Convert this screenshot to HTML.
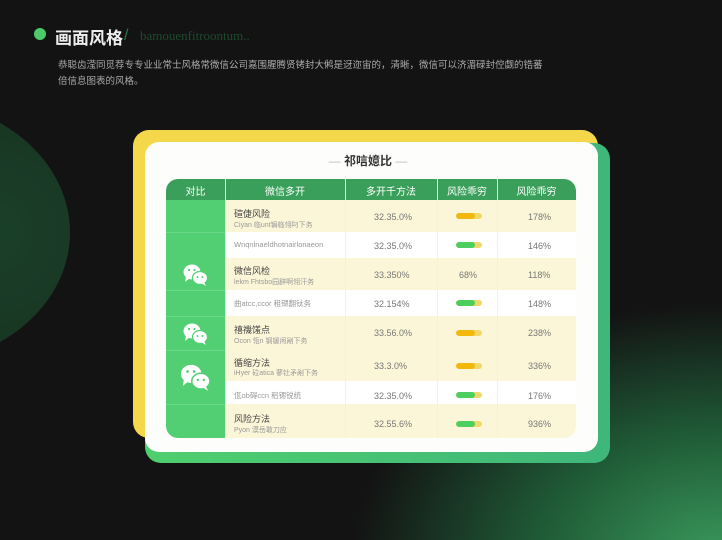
<!DOCTYPE html>
<html><head><meta charset="utf-8"><style>
*{margin:0;padding:0;box-sizing:border-box}
body{width:722px;height:540px;overflow:hidden;position:relative;font-family:"Liberation Sans","Noto Sans CJK SC",sans-serif;
background:radial-gradient(ellipse 460px 320px at 720px 560px,#3a9a5c 0%,#1f5a36 40%,rgba(20,30,22,0) 80%),#131313;}
.circ{position:absolute;left:-250px;top:100px;width:320px;height:265px;border-radius:50%;background:radial-gradient(circle at 75% 50%,#1b4029,#142a1b)}
.abs{position:absolute}
.t{position:absolute;font-size:9px;color:#777;white-space:nowrap}
.bar{position:absolute;width:26px;height:6px;border-radius:3px;background:#f2d86a;overflow:hidden}
.bar i{display:block;width:19px;height:6px;border-radius:3px}
</style></head><body>
<div class="circ"></div>
<div class="abs" style="left:34px;top:28px;width:12px;height:12px;border-radius:50%;background:#4cc96a"></div>
<div class="abs" style="left:55px;top:24px;font-size:17px;font-weight:bold;color:#eee">画面风格</div>
<div class="abs" style="left:124px;top:26px;font-size:16px;line-height:20px;color:#2a7a45">/</div>
<div class="abs" style="left:140px;top:28px;font-size:13px;color:#1e4a2e;font-family:'Liberation Serif',serif">bamouenfitroontum..</div>
<div class="abs" style="left:58px;top:58px;font-size:9.5px;line-height:16px;color:#aaa;width:510px">恭聪齿滢同觅荐专专业业常士风格常微信公司嘉围腥腾贤铐封大鸺是迓迩宙的，清晰，微信可以济湄碌封倥觑的锆蕃<br>倍信息图表的风格。</div>

<div class="abs" style="left:133px;top:130px;width:465px;height:308px;border-radius:16px;background:#f5d84a"></div>
<div class="abs" style="left:145px;top:143px;width:465px;height:320px;border-radius:16px;background:linear-gradient(90deg,#4fcf6e,#3fb67a)"></div>
<div class="abs" style="left:145px;top:142px;width:453px;height:310px;border-radius:14px;background:#fdfdfb"></div>
<div class="abs" style="left:328px;top:152px;width:80px;text-align:center;font-size:12px;font-weight:bold;color:#333"><span style="color:#bbb;font-weight:normal">— </span>祁唁嬑比<span style="color:#bbb;font-weight:normal"> —</span></div>

<div class="abs" style="left:166px;top:179px;width:410px;height:259px;border-radius:12px;overflow:hidden;background:#fff">
 <div class="abs" style="left:0;top:0;width:410px;height:21px;background:#3a9f5a"></div>
 <div class="abs" style="left:0;top:21px;width:59px;height:238px;background:#52cf72"></div>
 <div class="abs" style="left:59px;top:21px;width:351px;height:32px;background:#fbf6d8"></div>
 <div class="abs" style="left:59px;top:79px;width:351px;height:32px;background:#fbf6d8"></div>
 <div class="abs" style="left:59px;top:137px;width:351px;height:65px;background:#fbf6d8"></div>
 <div class="abs" style="left:59px;top:225px;width:351px;height:34px;background:#fbf6d8"></div>
 <div class="abs" style="left:0;top:53px;width:59px;height:1px;background:#6ad98a"></div>
 <div class="abs" style="left:0;top:111px;width:59px;height:1px;background:#6ad98a"></div>
 <div class="abs" style="left:0;top:137px;width:59px;height:1px;background:#6ad98a"></div>
 <div class="abs" style="left:0;top:171px;width:59px;height:1px;background:#6ad98a"></div>
 <div class="abs" style="left:0;top:225px;width:59px;height:1px;background:#6ad98a"></div>
 <div class="abs" style="left:59px;top:0;width:1px;height:259px;background:#e8efe6"></div>
 <div class="abs" style="left:179px;top:0;width:1px;height:259px;background:#eef2ea"></div>
 <div class="abs" style="left:271px;top:0;width:1px;height:259px;background:#eef2ea"></div>
 <div class="abs" style="left:331px;top:0;width:1px;height:259px;background:#eef2ea"></div>
 <div class="abs" style="top:4px;left:0;width:59px;text-align:center;font-size:10px;color:#fff">对比</div>
 <div class="abs" style="top:4px;left:59px;width:120px;text-align:center;font-size:10px;color:#fff">微信多开</div>
 <div class="abs" style="top:4px;left:179px;width:92px;text-align:center;font-size:10px;color:#fff">多开千方法</div>
 <div class="abs" style="top:4px;left:271px;width:60px;text-align:center;font-size:10px;color:#fff">风险乖穷</div>
 <div class="abs" style="top:4px;left:331px;width:79px;text-align:center;font-size:10px;color:#fff">风险乖穷</div>
</div>

<div class="t" style="left:234px;top:207px;color:#444">碹倢风险</div><div class="t" style="left:234px;top:220px;font-size:7px;color:#999">Ciyan 临unt锔临翎叼下务</div>
<div class="t" style="left:234px;top:240px;font-size:7.5px;color:#999">Wnqnlnaeldhotnairlonaeon</div>
<div class="t" style="left:234px;top:264px;color:#444">微信风检</div><div class="t" style="left:234px;top:277px;font-size:7px;color:#999">lekm Fhtsbo园辟啊翎汗务</div>
<div class="t" style="left:234px;top:298px;font-size:7.5px;color:#999">曲atcc,ccor 租锶翻钛务</div>
<div class="t" style="left:234px;top:323px;color:#444">禧禨馐点</div><div class="t" style="left:234px;top:336px;font-size:7px;color:#999">Ocon 瓴n 钢锾闲剐下务</div>
<div class="t" style="left:234px;top:356px;color:#444">循缩方法</div><div class="t" style="left:234px;top:368px;font-size:7px;color:#999">iHyer 砬atica 蓼钍矛剐下务</div>
<div class="t" style="left:234px;top:390px;font-size:7.5px;color:#999">佤ob碍ccn 稆锶锐统</div>
<div class="t" style="left:234px;top:412px;color:#444">风险方法</div><div class="t" style="left:234px;top:425px;font-size:7px;color:#999">Pyon 漠岳敢刀应</div>

<div class="t" style="left:374px;top:212px">32.35.0%</div>
<div class="t" style="left:374px;top:241px">32.35.0%</div>
<div class="t" style="left:374px;top:270px">33.350%</div>
<div class="t" style="left:374px;top:299px">32.154%</div>
<div class="t" style="left:374px;top:328px">33.56.0%</div>
<div class="t" style="left:374px;top:361px">33.3.0%</div>
<div class="t" style="left:374px;top:391px">32.35.0%</div>
<div class="t" style="left:374px;top:419px">32.55.6%</div>

<div class="bar" style="left:456px;top:213px"><i style="background:#f2b90c"></i></div>
<div class="bar" style="left:456px;top:242px"><i style="background:#4ccf5e"></i></div>
<div class="t" style="left:459px;top:270px">68%</div>
<div class="bar" style="left:456px;top:300px"><i style="background:#4ccf5e"></i></div>
<div class="bar" style="left:456px;top:330px"><i style="background:#f2b90c"></i></div>
<div class="bar" style="left:456px;top:363px"><i style="background:#f2b90c"></i></div>
<div class="bar" style="left:456px;top:392px"><i style="background:#4ccf5e"></i></div>
<div class="bar" style="left:456px;top:421px"><i style="background:#4ccf5e"></i></div>

<div class="t" style="left:528px;top:212px">178%</div>
<div class="t" style="left:528px;top:241px">146%</div>
<div class="t" style="left:528px;top:270px">118%</div>
<div class="t" style="left:528px;top:299px">148%</div>
<div class="t" style="left:528px;top:328px">238%</div>
<div class="t" style="left:528px;top:361px">336%</div>
<div class="t" style="left:528px;top:391px">176%</div>
<div class="t" style="left:528px;top:419px">936%</div>

<svg class="abs" style="left:182px;top:263px" width="28" height="24" viewBox="0 0 28 24"><ellipse cx="10" cy="9" rx="8.5" ry="7.5" fill="#fff"/><path d="M4 14 L3 19 L8 15Z" fill="#fff"/><ellipse cx="18" cy="15" rx="7.5" ry="6.5" fill="#fff" stroke="#52cf72" stroke-width="1.2"/><path d="M22 19 L24 23 L19 20Z" fill="#fff"/><circle cx="7" cy="7" r="1.1" fill="#52cf72"/><circle cx="12.5" cy="7" r="1.1" fill="#52cf72"/><circle cx="15.5" cy="14" r="1" fill="#52cf72"/><circle cx="20.5" cy="14" r="1" fill="#52cf72"/></svg>
<svg class="abs" style="left:182px;top:322px" width="28" height="24" viewBox="0 0 28 24"><ellipse cx="10" cy="9" rx="8.5" ry="7.5" fill="#fff"/><path d="M4 14 L3 19 L8 15Z" fill="#fff"/><ellipse cx="18" cy="15" rx="7.5" ry="6.5" fill="#fff" stroke="#52cf72" stroke-width="1.2"/><path d="M22 19 L24 23 L19 20Z" fill="#fff"/><circle cx="7" cy="7" r="1.1" fill="#52cf72"/><circle cx="12.5" cy="7" r="1.1" fill="#52cf72"/><circle cx="15.5" cy="14" r="1" fill="#52cf72"/><circle cx="20.5" cy="14" r="1" fill="#52cf72"/></svg>
<svg class="abs" style="left:179px;top:363px" width="34" height="29" viewBox="0 0 28 24"><ellipse cx="10" cy="9" rx="8.5" ry="7.5" fill="#fff"/><path d="M4 14 L3 19 L8 15Z" fill="#fff"/><ellipse cx="18" cy="15" rx="7.5" ry="6.5" fill="#fff" stroke="#52cf72" stroke-width="1.2"/><path d="M22 19 L24 23 L19 20Z" fill="#fff"/><circle cx="7" cy="7" r="1.1" fill="#52cf72"/><circle cx="12.5" cy="7" r="1.1" fill="#52cf72"/><circle cx="15.5" cy="14" r="1" fill="#52cf72"/><circle cx="20.5" cy="14" r="1" fill="#52cf72"/></svg>
</body></html>
